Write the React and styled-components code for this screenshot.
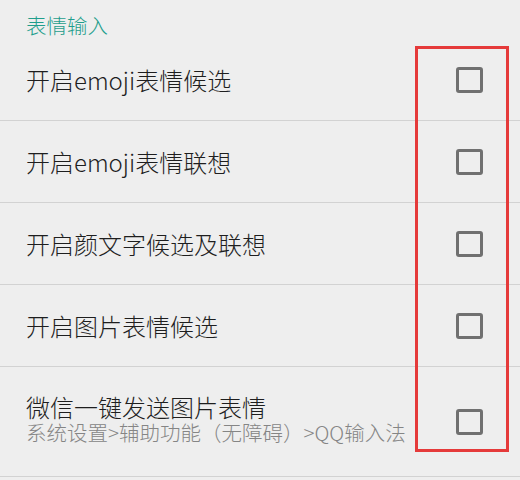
import styled, { createGlobalStyle } from 'styled-components'

const GlobalStyle = createGlobalStyle`
    html, body {
        margin: 0;
        padding: 0;
        background: #eeeeee;
    }
    body {
        font-family: "Noto Sans CJK SC", "Noto Sans", sans-serif;
    }
`;

const Page = styled.div`
    position: relative;
    width: 520px;
    height: 480px;
    overflow: hidden;
    background: #eeeeee;
`;

const SectionTitle = styled.div`
    height: 39px;
    box-sizing: border-box;
    padding: 13px 0 0 26px;
    font-size: 20.5px;
    font-weight: 300;
    line-height: 24px;
    color: #1f9e8c;
`;

const Row = styled.div`
    display: flex;
    align-items: center;
    height: ${props => props.tall ? 110 : 82}px;
    box-sizing: border-box;
    padding: 0 37px 0 26px;
    border-bottom: 1px solid #d2d2d2;
`;

const Texts = styled.div`
    flex: 1;
    display: flex;
    flex-direction: column;
    padding-bottom: ${props => props.tall ? 8 : 0}px;
`;

const Title = styled.div`
    font-size: 24px;
    font-weight: 300;
    line-height: 28px;
    color: #1e1e1e;
`;

const Summary = styled.div`
    font-size: 20.5px;
    font-weight: 300;
    line-height: 22px;
    color: #858585;
    white-space: nowrap;
`;

const CheckBox = styled.div`
    width: 27px;
    height: 26px;
    box-sizing: border-box;
    border: 3px solid #707070;
    border-radius: 3px;
`;

// red annotation frame drawn over the checkbox column
const Highlight = styled.div`
    position: absolute;
    left: 415px;
    top: 46px;
    width: 94px;
    height: 406px;
    box-sizing: border-box;
    border: 3px solid #e53a3a;
    pointer-events: none;
`;

const items = [
    { title: '开启emoji表情候选' },
    { title: '开启emoji表情联想' },
    { title: '开启颜文字候选及联想' },
    { title: '开启图片表情候选' },
    { title: '微信一键发送图片表情', summary: '系统设置>辅助功能（无障碍）>QQ输入法' },
];

function App() {
    return (
        <Page>
            <GlobalStyle />
            <SectionTitle>表情输入</SectionTitle>
            {items.map(item => (
                <Row key={item.title} tall={item.summary ? 1 : 0}>
                    <Texts tall={item.summary ? 1 : 0}>
                        <Title>{item.title}</Title>
                        {item.summary && <Summary>{item.summary}</Summary>}
                    </Texts>
                    <CheckBox />
                </Row>
            ))}
            <Highlight />
        </Page>
    )
}

export default App
